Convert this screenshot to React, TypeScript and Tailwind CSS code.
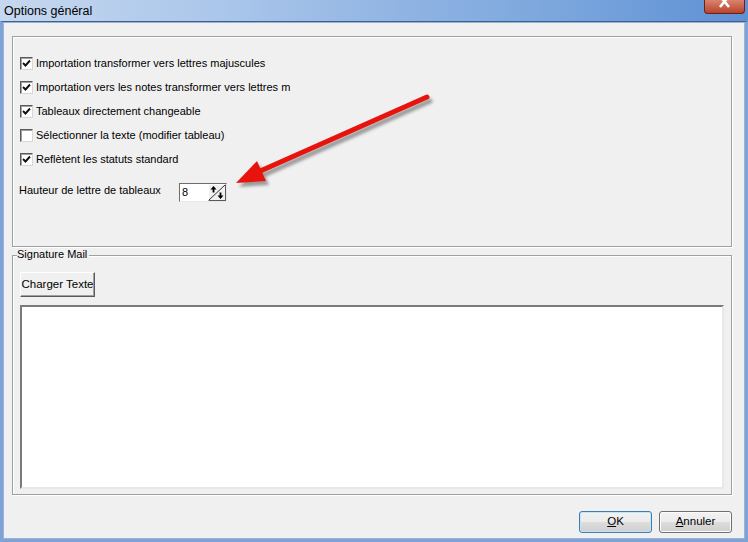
import React from "react";

const font = { fontFamily: '"Liberation Sans", Arial, sans-serif' };

function Check({ checked }: { checked: boolean }) {
  return (
    <div className="w-[13px] h-[13px] bg-white border border-t-[#5a5a5a] border-l-[#5a5a5a] border-b-[#d8d8d8] border-r-[#d8d8d8] shadow-[inset_1px_1px_0_#a0a0a0] flex items-center justify-center shrink-0">
      {checked && (
        <svg width="9" height="9" viewBox="0 0 9 9">
          <path d="M1 4 L3.5 6.5 L8 1.5" stroke="#111" strokeWidth="1.9" fill="none" />
        </svg>
      )}
    </div>
  );
}

const rows: [boolean, string][] = [
  [true, "Importation transformer vers lettres majuscules"],
  [true, "Importation vers les notes transformer vers lettres m"],
  [true, "Tableaux directement changeable"],
  [false, "Sélectionner la texte (modifier tableau)"],
  [true, "Reflètent les statuts standard"],
];

export default function App() {
  return (
    <div className="w-[748px] h-[542px] relative overflow-hidden bg-[#6f9ad6] text-[11px] text-black" style={font}>
      {/* Title bar */}
      <div className="h-[21px] relative bg-[linear-gradient(90deg,#c6d8ef_0%,#aac6ea_30%,#8fb3e2_55%,#7aa6dd_75%,#5f90d4_100%)] flex items-center">
        <span className="pl-[4px] text-[12.5px] text-black leading-none pt-[1px]">Options général</span>
        <div className="absolute left-[704px] top-0 w-[41px] h-[14px] rounded-b-[4px] bg-[linear-gradient(180deg,#d9846f,#b9432c)] border border-t-0 border-[#6b2215] flex items-start justify-center overflow-hidden">
          <svg width="14" height="12" viewBox="0 0 14 12">
            <path d="M2 -4 L11 7 M11 -4 L2 7" stroke="#fff" strokeWidth="2.6" />
          </svg>
        </div>
      </div>
      {/* Frame */}
      <div className="absolute left-0 top-[21px] right-0 bottom-0 border-[3px] border-t-[1px] border-[#7fa2d8] border-t-[#3d5f94]">
        <div className="w-full h-full bg-[#f0f0f0] border border-[#9bb3d3] flex flex-col pl-[8px] pr-[12px] pt-[13px]">
          {/* Group 1 */}
          <div className="h-[211px] border border-[#a0a0a0] shadow-[inset_1px_1px_0_#fff,1px_1px_0_#fff] flex flex-col pl-[7px] pt-[14px]">
            {rows.map(([c, t], i) => (
              <div key={i} className="h-[24px] flex items-center gap-[3px]">
                <Check checked={c} />
                <span className="leading-none">{t}</span>
              </div>
            ))}
            <div className="flex items-start -ml-[1px] mt-[12px]">
              <span className="w-[160px] leading-none pt-[2px]">Hauteur de lettre de tableaux</span>
              <div className="w-[48px] h-[19px] bg-white border border-t-[#6d6d6d] border-l-[#6d6d6d] border-b-[#e8e8e8] border-r-[#e8e8e8] flex items-center justify-between">
                <span className="pl-[2px] leading-none">8</span>
                <div className="w-[18px] h-[17px] bg-[#f0f0f0] border border-t-white border-l-white border-b-[#5a5a5a] border-r-[#5a5a5a]">
                  <svg width="16" height="15" viewBox="0 0 16 15">
                    <path d="M0 15 L16 0" stroke="#333" strokeWidth="1" />
                    <path d="M4.5 1 L1.5 4.5 L3.6 4.5 L3.6 7.5 L5.4 7.5 L5.4 4.5 L7.5 4.5 Z" fill="#000" />
                    <path d="M11.5 14 L8.5 10.5 L10.6 10.5 L10.6 7.5 L12.4 7.5 L12.4 10.5 L14.5 10.5 Z" fill="#000" />
                  </svg>
                </div>
              </div>
            </div>
          </div>
          {/* Group 2 */}
          <div className="mt-[8px] h-[240px] relative border border-[#a0a0a0] shadow-[inset_1px_1px_0_#fff,1px_1px_0_#fff] flex flex-col pl-[7px] pr-[7px] pt-[16px]">
            <span className="absolute left-[4px] -top-[7px] bg-[#f0f0f0] pr-[2px] leading-none">Signature Mail</span>
            <button className="w-[75px] h-[25px] bg-[#f0f0f0] border border-t-white border-l-white border-b-[#5a5a5a] border-r-[#5a5a5a] shadow-[inset_-1px_-1px_0_#a0a0a0] text-[11.5px] leading-none">
              Charger Texte
            </button>
            <div className="mt-[8px] h-[184px] bg-white border-2 border-t-[#7a7a7a] border-l-[#7a7a7a] border-b-[#e8e8e8] border-r-[#e8e8e8]" />
          </div>
          {/* Buttons */}
          <div className="flex justify-end gap-[7px] mt-[16px]">
            <button className="w-[73px] h-[22px] rounded-[3px] border border-[#3c7fb1] bg-[linear-gradient(180deg,#f2f2f2_0%,#ebebeb_50%,#dddddd_51%,#cfcfcf_100%)] shadow-[inset_0_0_0_1px_#c4e5f6] text-[11.5px] leading-none">
              <span className="underline">O</span>K
            </button>
            <button className="w-[73px] h-[22px] rounded-[3px] border border-[#707070] bg-[linear-gradient(180deg,#f2f2f2_0%,#ebebeb_50%,#dddddd_51%,#cfcfcf_100%)] shadow-[inset_0_0_0_1px_#fcfcfc] text-[11.5px] leading-none">
              <span className="underline">A</span>nnuler
            </button>
          </div>
        </div>
      </div>
      {/* Red arrow */}
      <svg className="absolute left-0 top-0 pointer-events-none" width="748" height="542">
        <defs>
          <filter id="blur" x="-20%" y="-20%" width="140%" height="140%">
            <feGaussianBlur stdDeviation="1.6" />
          </filter>
        </defs>
        <g transform="translate(3,4)" filter="url(#blur)" opacity="0.55">
          <path d="M427 97 L258 172" stroke="#555" strokeWidth="5" strokeLinecap="round" />
          <path d="M236 183 L257 161 L266 181 Z" fill="#555" />
        </g>
        <path d="M427 97 L258 172" stroke="#e8130c" strokeWidth="5" strokeLinecap="round" />
        <path d="M236 183 L257 161 L266 181 Z" fill="#e8130c" />
      </svg>
    </div>
  );
}
